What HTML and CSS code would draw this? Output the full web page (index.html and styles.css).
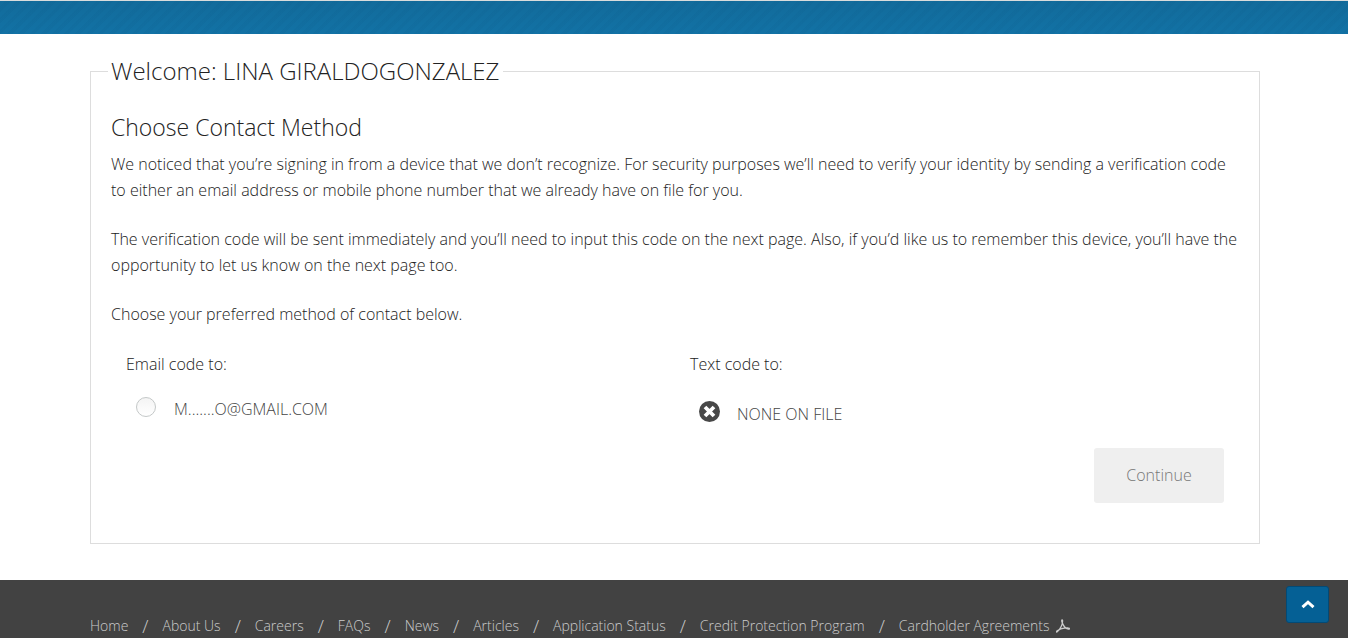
FILE: index.html
```html
<!DOCTYPE html>
<html lang="en">
<head>
<meta charset="utf-8">
<title>Choose Contact Method</title>
<link rel="stylesheet" href="styles.css">
</head>
<body>
<header class="banner"></header>
<main class="content">
  <form>
    <fieldset class="panel">
      <legend class="legend">Welcome: LINA GIRALDOGONZALEZ</legend>
      <h2 class="heading">Choose Contact Method</h2>
      <p class="text">We noticed that you’re signing in from a device that we don’t recognize. For security purposes we’ll need to verify your identity by sending a verification code to either an email address or mobile phone number that we already have on file for you.</p>
      <p class="text">The verification code will be sent immediately and you’ll need to input this code on the next page. Also, if you’d like us to remember this device, you’ll have the opportunity to let us know on the next page too.</p>
      <p class="text">Choose your preferred method of contact below.</p>
      <div class="methods">
        <div class="method">
          <div class="method-title">Email code to:</div>
          <div class="option">
            <input class="radio" type="radio" id="email" name="contact">
            <label for="email">M.......O@GMAIL.COM</label>
          </div>
        </div>
        <div class="method">
          <div class="method-title">Text code to:</div>
          <div class="option option-none">
            <svg class="none-icon" viewBox="0 0 21 21" aria-hidden="true"><circle cx="10.5" cy="10.5" r="10.5" fill="#484848"/><path d="M6 6l9 9M15 6l-9 9" stroke="#fff" stroke-width="3.800"/></svg>
            <span>NONE ON FILE</span>
          </div>
        </div>
      </div>
      <div class="actions"><button class="continue" type="submit" disabled>Continue</button></div>
    </fieldset>
  </form>
</main>
<footer class="footer">
  <nav>
    <ul class="links">
      <li><a href="#">Home</a></li>
      <li><a href="#">About Us</a></li>
      <li><a href="#">Careers</a></li>
      <li><a href="#">FAQs</a></li>
      <li><a href="#">News</a></li>
      <li><a href="#">Articles</a></li>
      <li><a href="#">Application Status</a></li>
      <li><a href="#">Credit Protection Program</a></li>
      <li><a href="#">Cardholder Agreements <svg class="pdf-icon" viewBox="0 0 14 14" aria-hidden="true"><path d="M1 13C4 11 7 5 6.500 1.200C6 .2 5.400 1.200 6 3C7 6.500 9.500 9.500 12.500 10.200C14 10.300 13.600 8.900 12 8.900C8 8.800 4 9.800 1.200 11.800C.2 12.600.4 13.300 1 13Z" fill="none" stroke="#ccc" stroke-width="1.300"/></svg></a></li>
    </ul>
  </nav>
</footer>
<button class="to-top" type="button" aria-label="Back to top"><svg class="chevron" viewBox="0 0 14 9" aria-hidden="true"><path d="M1.500 7.200L7 2.200l5.500 5" fill="none" stroke="#fff" stroke-width="3"/></svg></button>
</body>
</html>
```
FILE: styles.css
```css
* { box-sizing: border-box; }
body {
  margin: 0;
  min-height: 100vh;
  display: flex;
  flex-direction: column;
  background: #fff;
  color: #222;
  font: 300 16px/26px "Open Sans", sans-serif;
}
.banner {
  height: 34px;
  border-top: 1px solid #d9dcdc;
  background:
    repeating-linear-gradient(135deg, transparent 0 4px, rgba(0, 50, 90, .04) 4px 8px),
    linear-gradient(#126b9b, #1272a5);
}
.content { padding: 20px 88px 36px 90px; }
.panel {
  margin: 0;
  min-width: 0;
  padding: 22px 20px 40px 17px;
  border: 1px solid #ddd;
}
.legend {
  padding: 0 4px 0 3px;
  font-size: 24px;
  line-height: 34px;
}
.heading {
  margin: 0 0 7px 3px;
  font-size: 23px;
  font-weight: 300;
  line-height: 34px;
}
.text { margin: 0 0 23px 3px; }
.methods {
  display: grid;
  grid-template-columns: 1fr 1fr;
  margin: 24px 0 0 3px;
}
.method { padding-left: 15px; }
.option {
  display: flex;
  align-items: center;
  gap: 18px;
  margin-top: 19px;
  padding-left: 10px;
  color: #444;
}
.option-none { gap: 17px; margin-top: 24px; padding-left: 9px; }
.radio {
  appearance: none;
  flex: none;
  width: 20px;
  height: 20px;
  margin: 0 0 4px;
  border: 1px solid #c4c8c8;
  border-radius: 50%;
  background: linear-gradient(#f4f4f4, #fff);
}
.none-icon { flex: none; width: 21px; height: 21px; margin-bottom: 5px; }
.actions { display: flex; justify-content: flex-end; padding: 21px 15px 0 0; }
.continue {
  width: 130px;
  height: 55px;
  padding-bottom: 2px;
  border: 0;
  border-radius: 3px;
  background: #efefef;
  color: #777;
  font: inherit;
}
.footer {
  flex: 1;
  padding: 34px 90px 0;
  border-bottom: 1px solid #353535;
  background: #424242;
  font-size: 14px;
}
.links {
  display: flex;
  flex-wrap: wrap;
  margin: 0;
  padding: 0;
  list-style: none;
  color: #ccc;
  line-height: 24px;
}
.links li { display: flex; }
.links li + li::before { content: "/"; padding: 0 14px; font-size: 18px; }
.links a { color: #ccc; text-decoration: none; }
.pdf-icon { width: 14px; height: 14px; margin-left: 3px; vertical-align: -2px; }
.to-top {
  position: fixed;
  right: 19px;
  bottom: 15px;
  display: flex;
  align-items: center;
  justify-content: center;
  width: 43px;
  height: 37px;
  padding: 0;
  border: 1px solid #034a76;
  border-radius: 3px;
  background: #056095;
}
.chevron { width: 14px; height: 9px; }
```
